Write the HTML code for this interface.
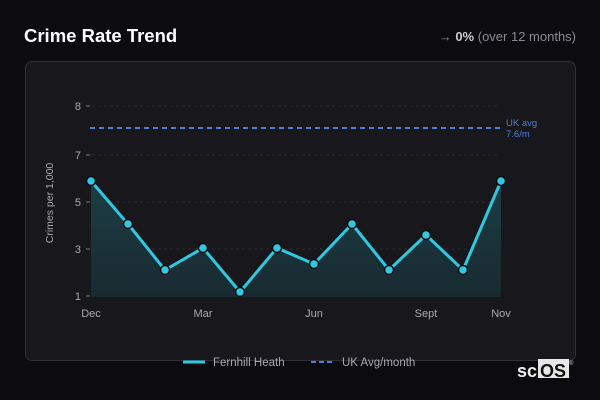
<!DOCTYPE html>
<html><head><style>
body{margin:0;width:600px;height:400px;background:#0c0b10;font-family:"Liberation Sans",sans-serif;position:relative;overflow:hidden}
.t{position:absolute;left:24px;top:25px;color:#fff;font-weight:bold;font-size:18.5px}
.r{position:absolute;right:24px;top:29px;color:#8a8a90;font-size:13px}
.r b{color:#ccc}
.card{position:absolute;left:25px;top:61px;width:549px;height:298px;background:#18181c;border:1px solid #2f2f35;border-radius:7px}
svg{position:absolute;left:0;top:0}
</style></head><body>
<div class="t">Crime Rate Trend</div>
<div class="r">→ <b>0%</b> (over 12 months)</div>
<div class="card"></div>
<svg width="600" height="400" font-family="Liberation Sans, sans-serif">
<defs><linearGradient id="g" x1="0" y1="0" x2="0" y2="1"><stop offset="0" stop-color="#1d3d45"/><stop offset="1" stop-color="#182a30"/></linearGradient></defs>
<g stroke="#2c2c31" stroke-dasharray="3,3" stroke-width="1">
<line x1="92" y1="106" x2="500" y2="106"/><line x1="92" y1="155" x2="500" y2="155"/><line x1="92" y1="202" x2="500" y2="202"/><line x1="92" y1="249" x2="500" y2="249"/>
</g>
<g stroke="#777" stroke-width="1"><line x1="86" y1="106" x2="90" y2="106"/><line x1="86" y1="155" x2="90" y2="155"/><line x1="86" y1="202" x2="90" y2="202"/><line x1="86" y1="249" x2="90" y2="249"/><line x1="86" y1="296" x2="90" y2="296"/></g>
<g fill="#a8a8ae" font-size="11" text-anchor="end"><text x="81" y="110">8</text><text x="81" y="159">7</text><text x="81" y="206">5</text><text x="81" y="253">3</text><text x="81" y="300">1</text></g>
<text transform="translate(53,203) rotate(-90)" fill="#a8a8ae" font-size="10.5" text-anchor="middle">Crimes per 1,000</text>
<polygon fill="url(#g)" points="91,297 91,181 128,224 165,270 203,248 240,292 277,248 314,264 352,224 389,270 426,235 463,270 501,181 501,297"/>
<line x1="90" y1="128" x2="500" y2="128" stroke="#4b7fd6" stroke-width="2" stroke-dasharray="5,4"/>
<text x="506" y="126" fill="#4b7fd6" font-size="9.5">UK avg</text><text x="506" y="137" fill="#4b7fd6" font-size="9.5">7.6/m</text>
<polyline fill="none" stroke="#2ec8e0" stroke-width="3" stroke-linejoin="round" points="91,181 128,224 165,270 203,248 240,292 277,248 314,264 352,224 389,270 426,235 463,270 501,181"/>
<g fill="#2ec8e0" stroke="#0c0c10" stroke-width="1.5">
<circle cx="91" cy="181" r="4.5"/><circle cx="128" cy="224" r="4.5"/><circle cx="165" cy="270" r="4.5"/><circle cx="203" cy="248" r="4.5"/><circle cx="240" cy="292" r="4.5"/><circle cx="277" cy="248" r="4.5"/><circle cx="314" cy="264" r="4.5"/><circle cx="352" cy="224" r="4.5"/><circle cx="389" cy="270" r="4.5"/><circle cx="426" cy="235" r="4.5"/><circle cx="463" cy="270" r="4.5"/><circle cx="501" cy="181" r="4.5"/></g>
<g fill="#a8a8ae" font-size="11" text-anchor="middle"><text x="91" y="317">Dec</text><text x="203" y="317">Mar</text><text x="314" y="317">Jun</text><text x="426" y="317">Sept</text><text x="501" y="317">Nov</text></g>
<line x1="183" y1="362" x2="205" y2="362" stroke="#2ec8e0" stroke-width="3"/>
<text x="213" y="366" fill="#a8a8ae" font-size="11.5">Fernhill Heath</text>
<line x1="311" y1="362" x2="335" y2="362" stroke="#4b7fd6" stroke-width="2" stroke-dasharray="5,3"/>
<text x="342" y="366" fill="#a8a8ae" font-size="11.5">UK Avg/month</text>
<text x="517" y="377" fill="#eee" font-size="18" font-weight="bold">sc</text>
<rect x="538" y="359" width="31" height="19" fill="#e8e8e8"/>
<text x="540" y="377" fill="#111" font-size="18" font-weight="bold">OS</text>
<text x="569" y="365" fill="#ccc" font-size="6">®</text>
</svg>
</body></html>
